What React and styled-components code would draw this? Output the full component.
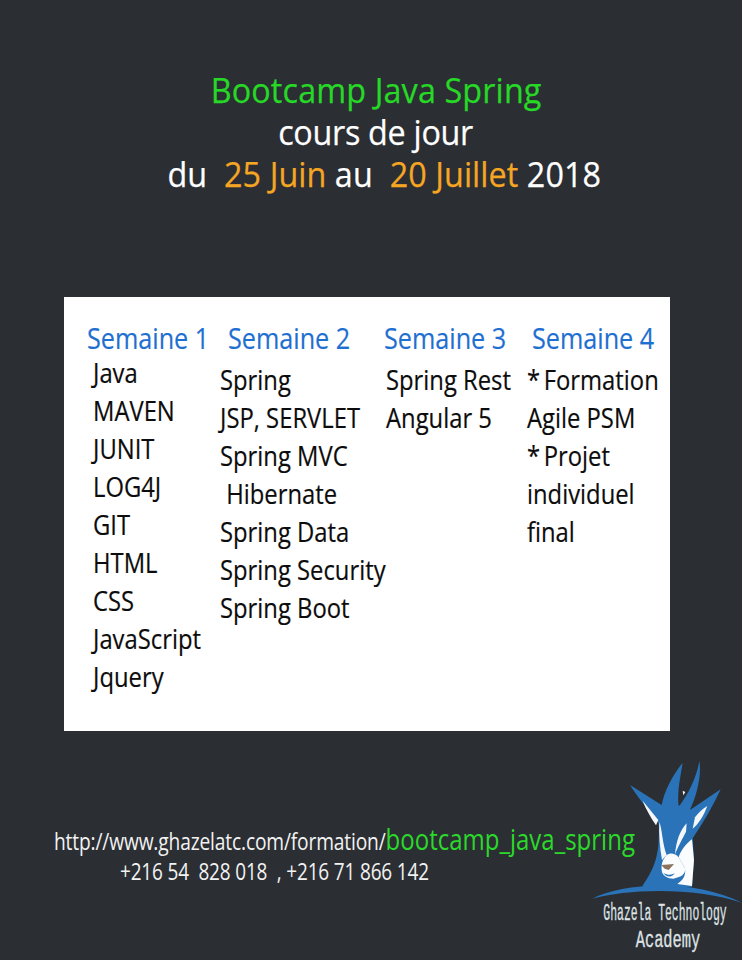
import React from 'react';
import styled, { createGlobalStyle } from 'styled-components';

const Global = createGlobalStyle`
  html, body { margin: 0; padding: 0; background: #2b2e33; }
  body { font-family: "Open Sans", "Noto Sans", sans-serif; }
`;
const Page = styled.div`
  width: 742px; height: 960px; overflow: hidden; background: #2b2e33;
  display: flex; flex-direction: column;
`;
const Header = styled.header`
  height: 297px; box-sizing: border-box; padding-top: 69px;
  display: flex; flex-direction: column; align-items: center;
`;
const HeadLine = styled.div`
  font-size: 34px; line-height: 42px; white-space: pre;
  letter-spacing: ${p => p.$track || 0}px;
  -webkit-text-stroke: .25px currentColor;
  transform: scaleX(.95);
  color: ${p => p.$color || '#fff'};
  margin-left: ${p => p.$shift || 0}px;
`;
const Orange = styled.span`color: #f5a623;`;
const Panel = styled.section`
  width: 606px; height: 434px; margin-left: 64px; background: #fff; box-sizing: border-box;
  padding: 22px 0 0 23px;
  display: grid; grid-template-columns: 133px 164px 143px 1fr;
`;
const Column = styled.div`display: flex; flex-direction: column; min-width: 0;`;
const WeekTitle = styled.h2`
  margin: 0 0 0 ${p => p.$indent || 0}px; font-weight: 400; font-size: 30px; line-height: 38px;
  -webkit-text-stroke: .2px currentColor;
  transform: scaleX(.84); transform-origin: left center;
  color: #1f6fd0; white-space: pre;
`;
const Topics = styled.ul`
  list-style: none; margin: ${p => p.$top}px 0 0 ${p => p.$indent || 0}px; padding: 0;
`;
const Topic = styled.li`
  font-size: 28px; line-height: 38px; color: #0c0c0c; white-space: pre;
  -webkit-text-stroke: .2px currentColor;
  word-spacing: ${p => (p.$tight ? -3 : 0)}px;
  transform: scaleX(.85); transform-origin: left center;
`;
const Footer = styled.footer`
  margin-top: 19px; height: 210px; display: grid; grid-template-columns: minmax(0, 1fr);
`;
const Contact = styled.div`
  grid-area: 1 / 1; min-width: 0; padding: 68px 0 0 54px; display: flex; flex-direction: column;
`;
const UrlLine = styled.div`
  height: 32px; display: flex; align-items: baseline; white-space: pre;
  font-size: 24px; letter-spacing: -0.2px; color: #f2f2f2;
  transform: scaleX(.8); transform-origin: left center;
`;
const UrlGreen = styled.span`font-size: 30px; letter-spacing: 0; color: #2bd92b;`;
const Phone = styled.div`
  margin: 5px 0 0 66px; white-space: pre; font-size: 24px; line-height: 32px; letter-spacing: -0.2px; color: #f2f2f2;
  transform: scaleX(.79); transform-origin: left center;
`;
const Logo = styled.svg`
  grid-area: 1 / 1; justify-self: end; width: 162px; height: 210px; display: block;
`;

const weeks = [
  { title: 'Semaine 1', tIndent: 0, top: -4, indent: 6, items: ['Java', 'MAVEN', 'JUNIT', 'LOG4J', 'GIT', 'HTML', 'CSS', 'JavaScript', 'Jquery'] },
  { title: 'Semaine 2', tIndent: 8, top: 3, indent: 0, items: ['Spring', 'JSP, SERVLET', 'Spring MVC', ' Hibernate', 'Spring Data', 'Spring Security', 'Spring Boot'] },
  { title: 'Semaine 3', tIndent: 0, top: 3, indent: 2, items: ['Spring Rest', 'Angular 5'] },
  { title: 'Semaine 4', tIndent: 5, top: 3, indent: 0, items: ['* Formation', 'Agile PSM', '* Projet', 'individuel', 'final'] },
];

const GhazelaLogo = () => (
  <Logo viewBox="0 0 486 630" aria-label="Ghazela Technology Academy">
    <path fill="#2a73b8" d="M36 446 C130 398 340 384 486 458 C350 412 150 414 36 446 Z" />
    <g transform="translate(150 30)">
      <path fill="#2a73b8" d="M0 75 L95 135 C102 95 128 45 158 8 C152 50 140 95 146 138 L150 135 C172 105 200 55 208 2 C216 50 198 110 180 150 L272 88 C250 135 222 185 188 235 L192 300 L186 382 L36 380 C66 335 92 295 86 190 C60 155 25 115 0 75 Z" />
      <path fill="#f4f7f9" d="M158 92 L166 96 L160 106 Z" />
      <path fill="#f4f7f9" d="M38 122 L85 180 L78 196 C62 172 48 148 38 122 Z" />
      <path fill="#f4f7f9" d="M232 138 C222 165 206 192 188 206 L195 172 C205 158 218 146 232 138 Z" />
      <path fill="#f4f7f9" d="M88 185 C96 205 98 255 110 285 L96 300 C90 265 86 225 88 185 Z" />
      <path fill="#f4f7f9" d="M170 190 C150 210 138 245 135 285 C142 262 160 232 168 215 Z" />
      <path fill="#fbfcfd" d="M186 238 L192 300 L186 378 L142 372 C158 360 168 350 165 325 L146 292 C152 270 170 250 186 238 Z" />
      <path fill="#fbfcfd" d="M110 285 C120 278 134 278 146 292 L165 325 C168 345 150 352 130 356 C112 356 100 348 96 336 C92 318 96 300 110 285 Z" />
      <path fill="#8c735f" d="M94 315 L132 312 L116 330 L104 326 Z" />
      <path fill="#2a73b8" d="M100 338 C112 346 124 346 134 340 C128 352 110 354 100 338 Z" />
    </g>
    <text x="255" y="510" fontFamily='"Liberation Mono", monospace' fontSize="74" stroke="#dfe3e6" strokeWidth="1" fill="#dfe3e6" textAnchor="middle" textLength="370" lengthAdjust="spacingAndGlyphs">Ghazela Technology</text>
    <text x="264" y="590" fontFamily='"Liberation Mono", monospace' fontSize="74" stroke="#dfe3e6" strokeWidth="1" fill="#dfe3e6" textAnchor="middle" textLength="194" lengthAdjust="spacingAndGlyphs">Academy</text>
  </Logo>
);

export default function App() {
  return (
    <Page>
      <Global />
      <Header>
        <HeadLine $color="#27d827" $shift={11} $track={0.15}>Bootcamp Java Spring</HeadLine>
        <HeadLine $shift={10} $track={-0.3}>cours de jour</HeadLine>
        <HeadLine $shift={27} $track={0.08}>du  <Orange>25 Juin</Orange> au  <Orange>20 Juillet</Orange> 2018</HeadLine>
      </Header>
      <Panel>
        {weeks.map(w => (
          <Column key={w.title}>
            <WeekTitle $indent={w.tIndent}>{w.title}</WeekTitle>
            <Topics $top={w.top} $indent={w.indent}>
              {w.items.map(i => <Topic key={i} $tight={i.startsWith('*')}>{i}</Topic>)}
            </Topics>
          </Column>
        ))}
      </Panel>
      <Footer>
        <Contact>
          <UrlLine>http://www.ghazelatc.com/formation/<UrlGreen>bootcamp_java_spring</UrlGreen></UrlLine>
          <Phone>+216 54  828 018  , +216 71 866 142</Phone>
        </Contact>
        <GhazelaLogo />
      </Footer>
    </Page>
  );
}
